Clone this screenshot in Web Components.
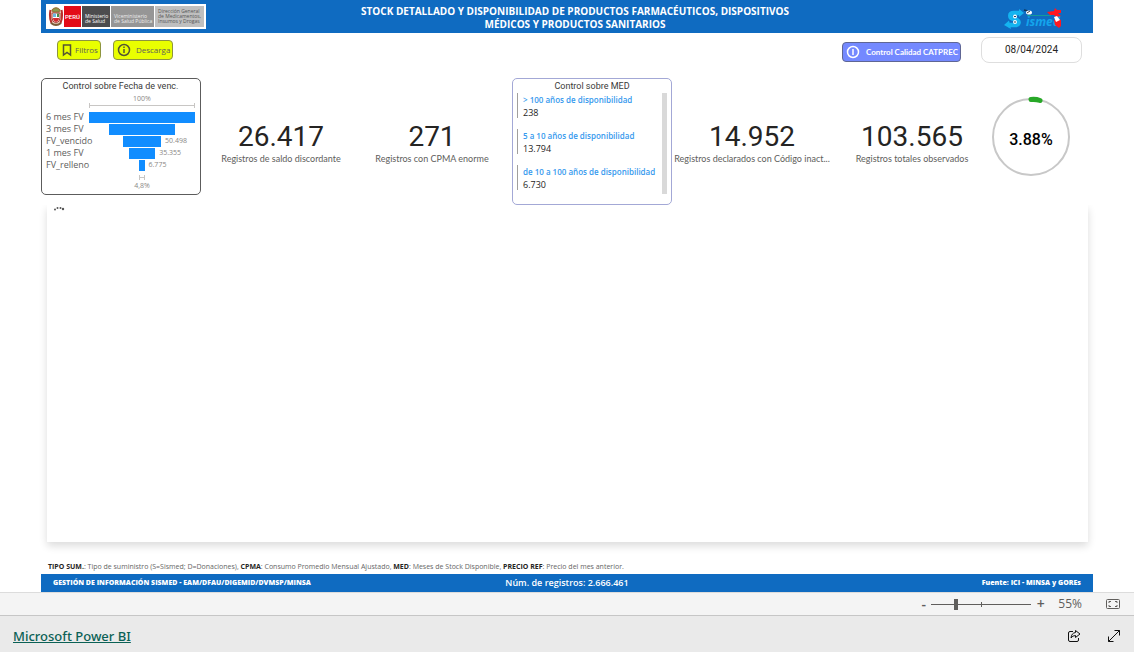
<!DOCTYPE html>
<html lang="es">
<head>
<meta charset="utf-8">
<meta name="viewport" content="width=device-width, initial-scale=1">
<title>Stock detallado y disponibilidad</title>
<style>
html,body{margin:0;background:#fff}
body{font-family:"Open Sans","Noto Sans",sans-serif;color:#252423}
</style>
</head>
<body>
<stock-app></stock-app>
<script>
function define(name, html) {
  const t = document.createElement('template');
  t.innerHTML = html;
  customElements.define(name, class extends HTMLElement {
    constructor() {
      super();
      this.attachShadow({ mode: 'open' }).append(t.content.cloneNode(true));
    }
  });
}

define('minsa-logo', `
<style>
:host{display:flex;box-sizing:border-box;width:160px;height:25px;padding:2px;background:#fff;font-size:5px;line-height:5px;color:#fff}
div{display:flex;align-items:center;box-sizing:border-box;padding:0 3px;margin-right:1px;white-space:nowrap}
svg{width:16px;height:21px;flex:none}
.p{justify-content:center;background:#e30b17;font:500 6px/8px Roboto,sans-serif;padding:0;width:17px}
.m{background:#4c4c4e;width:28px;padding-top:4px}
.v{background:#969696;width:43px;padding-top:4px;color:#eee}
.d{background:#bfbfbf;color:#555;flex:1;margin:0;padding-right:0}
</style>
<svg viewBox="0 0 16 21" aria-hidden="true">
 <ellipse cx="8" cy="10.500" rx="7" ry="9.500" fill="#ead9c4"/>
 <path d="M4 4Q8-.5 12 4L11 6H5Z" fill="#8a9a4c" stroke="#946b34"/>
 <path d="M2.500 4Q1 11 3.500 17M13.500 4Q15 11 12.500 17" fill="none" stroke="#b8302c" stroke-width="2"/>
 <path d="M4 7H12V12Q12 16 8 17Q4 16 4 12Z" fill="#fff" stroke="#a8362c"/>
 <path d="M5 7.500H8V11H5Z" fill="#6db8dd"/><path d="M9 7.500H11V11H9Z" fill="#4a8b46"/>
 <path d="M5 12H11Q11 15 8 16Q5 15 5 12Z" fill="#d32a2e"/>
 <path d="M3 17Q8 21 13 17" fill="none" stroke="#7b5c38" stroke-width="2"/>
</svg>
<div class="p">PERÚ</div>
<div class="m"><span>Ministerio<br>de Salud</span></div>
<div class="v"><span>Viceministerio<br>de Salud Pública</span></div>
<div class="d"><span>Dirección General<br>de Medicamentos,<br>Insumos y Drogas</span></div>`);

define('sismed-logo', `
<style>:host{display:block;width:60px;height:24px}svg{display:block;width:60px;height:24px;overflow:visible}</style>
<svg viewBox="0 0 60 24" role="img" aria-label="Sismed">
 <path d="M18 8H11C6 8 6 13 11 14C17 15 17 20 12 20H5" fill="none" stroke="#14b4f0" stroke-width="4.500"/>
 <path d="M16 4L21 8L16 12ZM6 15.500L1 20L8 24Z" fill="#14b4f0"/>
 <circle cx="12" cy="11.500" r="2" fill="#f5fbff"/><circle cx="12" cy="17" r="2" fill="#f5fbff"/>
 <path d="M11 11.500H13M11 17H13" stroke="#29475c"/>
 <path d="M21 5L25 6" stroke="#123351" stroke-width="1.500"/><ellipse cx="26" cy="7.500" rx="3" ry="2" fill="#fff"/><path d="M24 8L27 6" stroke="#444"/>
 <path d="M24 10.500H48" stroke="#159a9a"/>
 <text x="23" y="21" font-family="Open Sans, sans-serif" font-size="12" font-style="italic" font-weight="700" fill="#14a5ec">ismed</text>
 <path d="M44 7L51 6L52 3L54 5H58V8L55 8L58 11L53 12L51 10L47 10Z" fill="#ff1720"/>
 <path d="M51 15Q54 12 58 15V21L56 23L52 20Z" fill="#ff1720"/>
 <path d="M51 12L54 11L57 15L53 17Z" fill="#fff"/>
</svg>`);

define('report-header', `
<style>
:host{display:flex;align-items:center;box-sizing:border-box;min-height:33px;padding:0 30px 0 5px;background:#0f6bc1}
h1{flex:1;margin:0;padding:2px 59px 0 0;color:#fff;font-size:10px;line-height:13px;font-weight:700;text-align:center}
h1 span{display:block}
</style>
<minsa-logo></minsa-logo>
<h1><span>STOCK DETALLADO Y DISPONIBILIDAD DE PRODUCTOS FARMACÉUTICOS, DISPOSITIVOS</span><span>MÉDICOS Y PRODUCTOS SANITARIOS</span></h1>
<sismed-logo></sismed-logo>`);

define('icon-button', `
<style>
:host{display:block}
button{display:flex;align-items:center;box-sizing:border-box;height:20px;margin:0;padding:0 2px 0 3px;border:1px solid var(--line,#8d9440);border-radius:4px;background:var(--fill,#e9ff00);color:var(--ink,#605e5c);font:var(--face,8px/10px "Open Sans",sans-serif);gap:var(--gap,2px);white-space:nowrap}
</style>
<button type="button"><slot name="icon"></slot><slot></slot></button>`);

define('report-toolbar', `
<style>
:host{display:flex;align-items:center;gap:12px;box-sizing:border-box;height:33px;padding:0 11px 0 16px}
.blue{--fill:#7489ff;--line:#5f6694;--ink:#fff;--gap:6px;--face:700 8px/10px Lato,sans-serif;margin:4px 0 0 auto}
.info{--gap:5px}
svg{display:block;width:12px;height:14px;fill:none;stroke:#555534;stroke-width:1.500}
.info svg{width:14px}.blue svg{width:14px;stroke:#fff}
time{display:flex;align-items:center;justify-content:center;box-sizing:border-box;width:101px;height:26px;margin-left:8px;border:1px solid #dedede;border-radius:8px;font:10px/14px Roboto,sans-serif}
</style>
<icon-button><svg slot="icon" viewBox="0 0 12 14"><path d="M2.500 2H9.500V12L6 9.500L2.500 12Z"/></svg>Filtros</icon-button>
<icon-button class="info"><svg slot="icon" viewBox="0 0 14 14"><circle cx="7" cy="7" r="5.500"/><path d="M7 6V10M7 3.500V5"/></svg>Descarga</icon-button>
<icon-button class="blue"><svg slot="icon" viewBox="0 0 14 14"><circle cx="7" cy="7" r="5.500"/><path d="M7 4V10"/></svg>Control Calidad CATPREC</icon-button>
<time datetime="2024-04-08">08/04/2024</time>`);

customElements.define('funnel-row', class extends HTMLElement {
  constructor() {
    super();
    this.attachShadow({ mode: 'open' }).innerHTML = `
<style>
:host{display:grid;grid-template-columns:43px 1fr;align-items:center;height:12px;font-size:9px;line-height:12px;color:#605e5c;white-space:nowrap}
.plot{display:grid;grid-template-columns:1fr minmax(0,var(--share)) 1fr;align-items:center}
i{grid-column:2;height:11px;background:#118dff}
.value{font-size:7px;color:#8a8886}
::slotted(span){padding-left:4px}
.name{width:0}
</style>
<span class="name"><slot></slot></span><span class="plot"><i></i><span class="value"><slot name="value"></slot></span></span>`;
  }
  connectedCallback() { this.style.setProperty('--share', this.getAttribute('share')); }
});

define('funnel-card', `
<style>
:host{display:block;box-sizing:border-box;height:117px;padding:1px 5px 0 4px;border:1px solid #5c5c5c;border-radius:5px}
h2{margin:0;font:9px/12px Roboto,sans-serif;text-align:center;color:#3b3a39}
.scale{margin-left:43px;text-align:center;font-size:7px;line-height:9px;color:#8a8886}
.rule{height:5px;border:solid #c8c6c4;border-width:0 1px;background:linear-gradient(#c8c6c4,#c8c6c4) center/100% 1px no-repeat}
.top{margin-top:2px}.top .rule{margin-bottom:3px}
.foot .rule{width:4px;margin:4px auto 1px}
</style>
<h2>Control sobre Fecha de venc.</h2>
<div class="scale top">100%<div class="rule"></div></div>
<funnel-row share="100%">6 mes FV</funnel-row>
<funnel-row share="62%">3 mes FV</funnel-row>
<funnel-row share="36%">FV_vencido<span slot="value">50.498</span></funnel-row>
<funnel-row share="25%">1 mes FV<span slot="value">35.355</span></funnel-row>
<funnel-row share="4.8%">FV_relleno<span slot="value">6.775</span></funnel-row>
<div class="scale foot"><div class="rule"></div>4,8%</div>`);

define('kpi-value', `
<style>
:host{display:block;min-width:0;padding:42px 2px 0;text-align:center}
.n{font:28px/33px Roboto,sans-serif;color:#252423}
.l{font:9px/12px Lato,sans-serif;color:#605e5c;white-space:nowrap;overflow:hidden;text-overflow:ellipsis}
</style>
<div class="n"><slot name="n"></slot></div><div class="l"><slot></slot></div>`);

define('med-card', `
<style>
:host{display:flex;flex-direction:column;box-sizing:border-box;height:127px;padding:1px 4px 9px;border:1px solid #a3a8d6;border-radius:5px}
h2{margin:0;font:9px/13px Roboto,sans-serif;text-align:center;color:#3b3a39}
.body{display:flex;justify-content:space-between;flex:1;min-height:0}
dl{display:flex;flex-direction:column;gap:11px;margin:0}
dl div{box-sizing:border-box;height:25px;padding-left:5px;border-left:1px solid #a19f9d}
dt{font-size:8px;line-height:13px;font-weight:600;color:#3599ee;white-space:nowrap}
dd{margin:0;font-size:9px;line-height:14px}
.bar{width:5px;background:#d9d9d9;height:101px}
</style>
<h2>Control sobre MED</h2>
<div class="body"><dl>
<div><dt>&gt; 100 años de disponibilidad</dt><dd>238</dd></div>
<div><dt>5 a 10 años de disponibilidad</dt><dd>13.794</dd></div>
<div><dt>de 10 a 100 años de disponibilidad</dt><dd>6.730</dd></div>
</dl><div class="bar"></div></div>`);

define('progress-ring', `
<style>
:host{display:grid;width:78px;height:80px;margin-top:18px;place-items:center}
svg,span{grid-area:1/1}
svg{width:78px;height:80px}
span{font:500 16px/20px Roboto,sans-serif;color:#000;padding-top:8px}
</style>
<svg viewBox="0 0 78 80" fill="none" aria-hidden="true"><circle cx="39" cy="41" r="38" stroke="#c8c8c8" stroke-width="2"/><path d="M39 3.500Q44 3 48 4.500" stroke="#28a828" stroke-width="5" stroke-linecap="round"/></svg>
<span><slot></slot></span>`);

define('kpi-strip', `
<style>
:host{display:grid;grid-template-columns:160fr 160fr 142fr 169fr 160fr 160fr 101fr;align-items:start;margin-top:12px;min-height:127px}
med-card{margin-left:9px}
</style>
<funnel-card></funnel-card>
<kpi-value><span slot="n">26.417</span>Registros de saldo discordante</kpi-value>
<kpi-value><span slot="n">271</span>Registros con CPMA enorme</kpi-value>
<med-card></med-card>
<kpi-value><span slot="n">14.952</span>Registros declarados con Código inact...</kpi-value>
<kpi-value><span slot="n">103.565</span>Registros totales observados</kpi-value>
<progress-ring>3.88%</progress-ring>`);

define('data-panel', `
<style>
:host{display:block;flex:1;margin:0 5px 0 6px;box-shadow:0 4px 8px rgba(0,0,0,.14);background:#fff;clip-path:inset(0 -14px -16px)}
svg{display:block;width:12px;height:6px;padding:1px 0 0 6px}
</style>
<svg viewBox="0 0 12 6" fill="#555" aria-label="Cargando" role="img"><circle cx="2" cy="3.500" r="1"/><circle cx="4.500" cy="2" r="1"/><circle cx="7.500" cy="2" r="1"/><circle cx="10" cy="3" r="1.200"/></svg>`);

define('legend-note', `
<style>
:host{display:block;margin-top:19px;padding:0 7px 2px;font-size:7px;line-height:11px;color:#666}
b{color:#252423}
</style>
<b>TIPO SUM.</b>: Tipo de suministro (S=Sismed; D=Donaciones), <b>CPMA</b>: Consumo Promedio Mensual Ajustado, <b>MED</b>: Meses de Stock Disponible, <b>PRECIO REF</b>: Precio del mes anterior.`);

define('report-footer', `
<style>
:host{display:grid;grid-template-columns:1fr auto 1fr;align-items:center;height:18px;padding:0 12px;background:#0f6bc1;color:#fff;font-size:7px;line-height:10px;font-weight:800}
.c{font-size:9px;line-height:12px;font-weight:600}
.r{text-align:right}
</style>
<span>GESTIÓN DE INFORMACIÓN SISMED - EAM/DFAU/DIGEMID/DVMSP/MINSA</span><span class="c">Núm. de registros: 2.666.461</span><span class="r">Fuente: ICI - MINSA y GOREs</span>`);

define('zoom-bar', `
<style>
:host{display:flex;align-items:center;justify-content:flex-end;box-sizing:border-box;height:24px;padding-right:14px;border-top:1px solid #dcdcdc;border-bottom:1px solid #c6c6c6;background:#f4f4f4;color:#605e5c;font-size:12px;line-height:16px}
button{display:block;margin:0;padding:0;border:0;background:none;color:inherit;font:600 14px/16px "Open Sans",sans-serif;width:9px}
input{appearance:none;width:100px;height:12px;margin:0 5px 0 3px;background:linear-gradient(#605e5c,#605e5c) 50% 50%/1px 5px no-repeat,linear-gradient(#605e5c,#605e5c) 0 50%/100% 1px no-repeat}
input::-webkit-slider-thumb{appearance:none;width:4px;height:11px;background:#605e5c}
output{margin:0 24px 0 13px}
.fit{width:14px}
svg{display:block;width:14px;height:12px;fill:none;stroke:#605e5c}
</style>
<button type="button" aria-label="Alejar">-</button><input type="range" min="0" max="100" value="24" aria-label="Zoom"><button type="button" aria-label="Acercar">+</button><output>55%</output>
<button class="fit" type="button" aria-label="Ajustar a la página"><svg viewBox="0 0 14 12"><rect x=".5" y="1.500" width="13" height="9" rx="1"/><path d="M5 3.500H3V5M3 7V8.500H5M9 3.500H11V5M11 7V8.500H9"/></svg></button>`);

define('embed-footer', `
<style>
:host{display:flex;align-items:center;box-sizing:border-box;height:36px;padding:4px 13px 0;background:#eaeaea}
a{color:#0b6155;font:500 13px/18px "Noto Sans",sans-serif;margin-right:auto}
button{display:block;margin:0 0 0 26px;padding:0;border:0;background:none}
svg{display:block;width:14px;height:14px;fill:none;stroke:#111}
</style>
<a href="#">Microsoft Power BI</a>
<button type="button" aria-label="Compartir"><svg viewBox="0 0 14 14"><path d="M6 2.500H3Q1.500 2.500 1.500 4V11Q1.500 12.500 3 12.500H10Q11.500 12.500 11.500 11V9"/><path d="M8.500 1.500L13 5L8.500 8.500V6.500Q5.500 6.500 4 9Q4.500 4 8.500 3.500Z"/></svg></button>
<button type="button" aria-label="Pantalla completa"><svg viewBox="0 0 14 14"><path d="M1.500 12.500L12.500 1.500M7.500 1.500H12.500V6.500M1.500 7.500V12.500H6.500"/></svg></button>`);

define('stock-app', `
<style>
:host{display:flex;flex-direction:column;min-height:100vh}
main{display:flex;flex-direction:column;flex:1;padding:0 41px}
</style>
<main><report-header></report-header><report-toolbar></report-toolbar><kpi-strip></kpi-strip><data-panel></data-panel><legend-note></legend-note><report-footer></report-footer></main>
<zoom-bar></zoom-bar><embed-footer></embed-footer>`);
</script>
</body>
</html>
